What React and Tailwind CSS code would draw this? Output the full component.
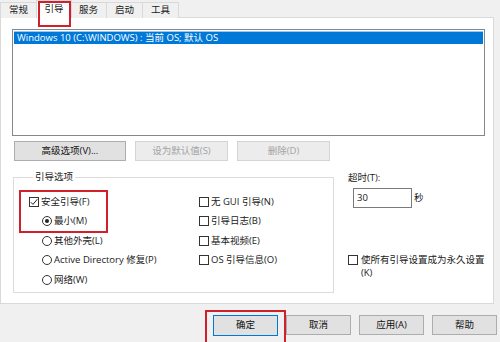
const font = { fontFamily: '"Open Sans", "Noto Sans CJK SC", sans-serif' };

function Check({ checked }) {
  return (
    <span className="w-[10px] h-[10px] border border-[#333] bg-white flex items-center justify-center shrink-0">
      {checked && (
        <svg width="8" height="8" viewBox="0 0 8 8">
          <path d="M0.8 4.2 L3 6.4 L7.3 1.2" fill="none" stroke="#222" strokeWidth="1" />
        </svg>
      )}
    </span>
  );
}

function Radio({ checked }) {
  return (
    <span className="w-[10px] h-[10px] rounded-full border border-[#333] bg-white flex items-center justify-center shrink-0">
      {checked && <span className="w-[4px] h-[4px] rounded-full bg-[#222]" />}
    </span>
  );
}

function Row({ children, control, indent }) {
  return (
    <div className={`h-[19.5px] flex items-center gap-[2px] ${indent ? 'pl-[13px]' : ''}`}>
      {control}
      <span>{children}</span>
    </div>
  );
}

function Btn({ children, disabled, w, primary, className = '' }) {
  return (
    <div
      className={`h-[20px] flex items-center justify-center border ${w} ${className} ${
        disabled
          ? 'bg-[#ececec] border-[#d4d4d4] text-[#a3a3a3]'
          : primary
          ? 'bg-[#e1e1e1] border-[#0078d7] text-[#111]'
          : 'bg-[#e1e1e1] border-[#adadad] text-[#111]'
      }`}
    >
      {children}
    </div>
  );
}

const tabs = ['常规', '引导', '服务', '启动', '工具'];

export default function App() {
  return (
    <div className="w-[500px] h-[342px] bg-[#f0f0f0] text-[9.5px] text-[#1a1a1a] overflow-hidden flex flex-col" style={font}>
      <div className="h-[18px] flex items-end relative z-10">
        {tabs.map((t, i) =>
          i === 1 ? (
            <div key={t} className="relative w-[36px] h-[18px] bg-white border border-b-0 border-[#d9d9d9] flex items-start justify-center pt-[1px] -mx-px">
              {t}
              <div className="absolute left-[1px] right-0 top-0 bottom-[-9px] border-2 border-[#d0202a]" />
            </div>
          ) : (
            <div key={t} className="w-[37px] h-[16px] bg-[#f0f0f0] border border-b-0 border-[#d9d9d9] flex items-center justify-center -ml-px first:ml-0">
              {t}
            </div>
          )
        )}
      </div>

      <div className="w-[494px] h-[287px] -mt-px bg-white border border-[#d9d9d9] flex flex-col">
        <div className="ml-[11px] mt-[11px] w-[473px] h-[107px] border border-[#828790] p-px">
          <div className="h-[13px] bg-[#0078d7] text-white flex items-center pl-[3px] border-t border-[#99c9ef]">
            Windows 10 (C:\WINDOWS) : 当前 OS; 默认 OS
          </div>
        </div>

        <div className="flex ml-[13px] mt-[5px] gap-[9px]">
          <Btn w="w-[112px]">高级选项(V)...</Btn>
          <Btn w="w-[93px]" disabled>设为默认值(S)</Btn>
          <Btn w="w-[93px]" disabled>删除(D)</Btn>
        </div>

        <div className="flex mt-[9px]">
          <fieldset className="ml-[12px] w-[321px] h-[123px] border border-[#dcdcdc] pl-[15px] flex">
            <legend className="ml-[4px] px-[2px] leading-[14px]">引导选项</legend>
            <div className="w-[170px] pt-[8px]">
              <div className="relative">
                <Row control={<Check checked />}>安全引导(F)</Row>
                <Row indent control={<Radio checked />}>最小(M)</Row>
                <div className="absolute left-[-10px] top-[-2px] bottom-[-2px] w-[89px] border-2 border-[#d0202a]" />
              </div>
              <Row indent control={<Radio />}>其他外壳(L)</Row>
              <Row indent control={<Radio />}>Active Directory 修复(P)</Row>
              <Row indent control={<Radio />}>网络(W)</Row>
            </div>
            <div className="pt-[8px]">
              <Row control={<Check />}>无 GUI 引导(N)</Row>
              <Row control={<Check />}>引导日志(B)</Row>
              <Row control={<Check />}>基本视频(E)</Row>
              <Row control={<Check />}>OS 引导信息(O)</Row>
            </div>
          </fieldset>

          <div className="ml-[14px] flex flex-col">
            <div className="leading-[14px] mt-[1px]">超时(T):</div>
            <div className="flex items-center mt-[3px] ml-[5px]">
              <div className="w-[59px] h-[20px] border border-[#7a7a7a] flex items-center pl-[3px]">30</div>
              <span className="ml-[2px]">秒</span>
            </div>
            <div className="flex mt-[45px] gap-[3px]">
              <span className="mt-[2px]"><Check /></span>
              <span className="leading-[13px]">使所有引导设置成为永久设置<br />(K)</span>
            </div>
          </div>
        </div>
      </div>

      <div className="flex justify-end gap-[8px] pr-[3px] mt-[11px]">
        <div className="relative">
          <Btn w="w-[65px] h-[21px]" primary>确定</Btn>
          <div className="absolute left-[-8px] right-[-8px] top-[-5px] bottom-[-8px] border-2 border-[#d0202a]" />
        </div>
        <Btn w="w-[65px]">取消</Btn>
        <Btn w="w-[65px]">应用(A)</Btn>
        <Btn w="w-[65px]">帮助</Btn>
      </div>
    </div>
  );
}
